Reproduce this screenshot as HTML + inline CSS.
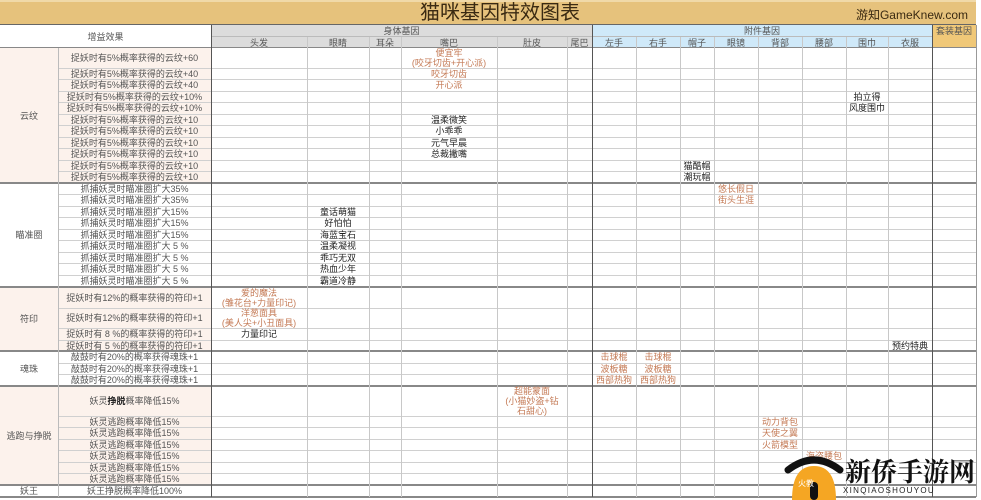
<!DOCTYPE html>
<html><head><meta charset="utf-8"><style>
*{margin:0;padding:0;box-sizing:border-box}
body{width:981px;height:500px;overflow:hidden;background:#fff;position:relative;font-family:"Liberation Sans","Noto Sans CJK SC",sans-serif}
.a{position:absolute}
.t{position:absolute;display:flex;flex-direction:column;align-items:center;justify-content:center;text-align:center;line-height:10px;font-size:9px;color:#555;white-space:nowrap}
.o{color:#c47a55}
.k{color:#222}
.h{position:absolute;left:58px;width:918px;height:1px;background:#d0d0d0}
.H{position:absolute;left:0;width:976px;height:2px;background:#888}
.v{position:absolute;top:37px;height:460px;width:1px;background:#c8c8c8}
.V{position:absolute;top:25px;height:472px;width:1px;background:#555}
</style></head><body>
<div class="a" style="left:0;top:0;width:976px;height:25px;background:#e6c27c;border-top:2px solid #f0d9a8"></div>
<div class="t" style="left:330px;top:1px;width:340px;height:24px;font-size:20px;line-height:22px;color:#3a2a12">猫咪基因特效图表</div>
<div class="t" style="left:846px;top:7px;width:132px;height:16px;font-size:12px;line-height:14px;color:#3a2a12">游知GameKnew.com</div>
<div class="a" style="left:211px;top:25px;width:381px;height:23px;background:#dcdcdc"></div>
<div class="a" style="left:592px;top:25px;width:340px;height:23px;background:#cfe9f9"></div>
<div class="a" style="left:932px;top:25px;width:44px;height:23px;background:#f0c878"></div>
<div class="a" style="left:211px;top:36px;width:721px;height:1px;background:#bbb"></div>
<div class="t" style="left:0;top:25px;width:211px;height:23px">增益效果</div>
<div class="t" style="left:211px;top:25px;width:381px;height:11px">身体基因</div>
<div class="t" style="left:592px;top:25px;width:340px;height:11px">附件基因</div>
<div class="t" style="left:932px;top:25px;width:44px;height:11px">套装基因</div>
<div class="t" style="left:211px;top:37px;width:96px;height:11px">头发</div>
<div class="t" style="left:307px;top:37px;width:62px;height:11px">眼睛</div>
<div class="t" style="left:369px;top:37px;width:32px;height:11px">耳朵</div>
<div class="t" style="left:401px;top:37px;width:96px;height:11px">嘴巴</div>
<div class="t" style="left:497px;top:37px;width:70px;height:11px">肚皮</div>
<div class="t" style="left:567px;top:37px;width:25px;height:11px">尾巴</div>
<div class="t" style="left:592px;top:37px;width:44px;height:11px">左手</div>
<div class="t" style="left:636px;top:37px;width:44px;height:11px">右手</div>
<div class="t" style="left:680px;top:37px;width:34px;height:11px">帽子</div>
<div class="t" style="left:714px;top:37px;width:44px;height:11px">眼镜</div>
<div class="t" style="left:758px;top:37px;width:44px;height:11px">背部</div>
<div class="t" style="left:802px;top:37px;width:44px;height:11px">腰部</div>
<div class="t" style="left:846px;top:37px;width:42px;height:11px">围巾</div>
<div class="t" style="left:888px;top:37px;width:44px;height:11px">衣服</div>
<div class="a" style="left:0;top:48px;width:211px;height:135px;background:#fcf2ec"></div>
<div class="a" style="left:0;top:287px;width:211px;height:64px;background:#fcf2ec"></div>
<div class="a" style="left:0;top:386px;width:211px;height:99px;background:#fcf2ec"></div>
<div class="h" style="top:68px"></div><div class="h" style="top:79px"></div><div class="h" style="top:91px"></div><div class="h" style="top:102px"></div><div class="h" style="top:114px"></div><div class="h" style="top:125px"></div><div class="h" style="top:137px"></div><div class="h" style="top:148px"></div><div class="h" style="top:160px"></div><div class="h" style="top:171px"></div>
<div class="h" style="top:194px"></div><div class="h" style="top:206px"></div><div class="h" style="top:217px"></div><div class="h" style="top:229px"></div><div class="h" style="top:240px"></div><div class="h" style="top:252px"></div><div class="h" style="top:263px"></div><div class="h" style="top:275px"></div>
<div class="h" style="top:308px"></div><div class="h" style="top:328px"></div><div class="h" style="top:340px"></div>
<div class="h" style="top:363px"></div><div class="h" style="top:374px"></div>
<div class="h" style="top:416px"></div><div class="h" style="top:427px"></div><div class="h" style="top:439px"></div><div class="h" style="top:450px"></div><div class="h" style="top:462px"></div><div class="h" style="top:473px"></div>
<div class="H" style="top:47px;height:1px"></div>
<div class="H" style="top:182px"></div><div class="H" style="top:286px"></div><div class="H" style="top:350px"></div><div class="H" style="top:385px"></div><div class="H" style="top:484px"></div><div class="H" style="top:496px"></div>
<div class="a" style="left:0;top:24px;width:976px;height:1px;background:#666"></div>
<div class="V" style="left:58px;top:48px;height:449px;background:#bbb"></div>
<div class="V" style="left:211px"></div>
<div class="v" style="left:307px"></div><div class="v" style="left:369px"></div><div class="v" style="left:401px"></div><div class="v" style="left:497px"></div><div class="v" style="left:567px"></div>
<div class="V" style="left:592px"></div>
<div class="v" style="left:636px"></div><div class="v" style="left:680px"></div><div class="v" style="left:714px"></div><div class="v" style="left:758px"></div><div class="v" style="left:802px"></div><div class="v" style="left:846px"></div><div class="v" style="left:888px"></div>
<div class="V" style="left:932px"></div>
<div class="V" style="left:976px;background:#999"></div>
<div class="t" style="left:0;top:48px;width:58px;height:135px">云纹</div>
<div class="t" style="left:0;top:183px;width:58px;height:104px">瞄准圈</div>
<div class="t" style="left:0;top:287px;width:58px;height:64px">符印</div>
<div class="t" style="left:0;top:351px;width:58px;height:35px">魂珠</div>
<div class="t" style="left:0;top:386px;width:58px;height:99px">逃跑与挣脱</div>
<div class="t" style="left:0;top:485px;width:58px;height:12px">妖王</div>
<div class="t" style="left:58px;top:48px;width:153px;height:20px">捉妖时有5%概率获得的云纹+60</div>
<div class="t" style="left:58px;top:68px;width:153px;height:11.5px">捉妖时有5%概率获得的云纹+40</div>
<div class="t" style="left:58px;top:79.5px;width:153px;height:11.5px">捉妖时有5%概率获得的云纹+40</div>
<div class="t" style="left:58px;top:91px;width:153px;height:11.5px">捉妖时有5%概率获得的云纹+10%</div>
<div class="t" style="left:58px;top:102.5px;width:153px;height:11.5px">捉妖时有5%概率获得的云纹+10%</div>
<div class="t" style="left:58px;top:114px;width:153px;height:11.5px">捉妖时有5%概率获得的云纹+10</div>
<div class="t" style="left:58px;top:125.5px;width:153px;height:11.5px">捉妖时有5%概率获得的云纹+10</div>
<div class="t" style="left:58px;top:137px;width:153px;height:11.5px">捉妖时有5%概率获得的云纹+10</div>
<div class="t" style="left:58px;top:148.5px;width:153px;height:11.5px">捉妖时有5%概率获得的云纹+10</div>
<div class="t" style="left:58px;top:160px;width:153px;height:11.5px">捉妖时有5%概率获得的云纹+10</div>
<div class="t" style="left:58px;top:171.5px;width:153px;height:11.5px">捉妖时有5%概率获得的云纹+10</div>
<div class="t" style="left:58px;top:183px;width:153px;height:11.5px">抓捕妖灵时瞄准圈扩大35%</div>
<div class="t" style="left:58px;top:194.5px;width:153px;height:11.5px">抓捕妖灵时瞄准圈扩大35%</div>
<div class="t" style="left:58px;top:206px;width:153px;height:11.5px">抓捕妖灵时瞄准圈扩大15%</div>
<div class="t" style="left:58px;top:217.5px;width:153px;height:11.5px">抓捕妖灵时瞄准圈扩大15%</div>
<div class="t" style="left:58px;top:229px;width:153px;height:11.5px">抓捕妖灵时瞄准圈扩大15%</div>
<div class="t" style="left:58px;top:240.5px;width:153px;height:11.5px">抓捕妖灵时瞄准圈扩大 5 %</div>
<div class="t" style="left:58px;top:252px;width:153px;height:11.5px">抓捕妖灵时瞄准圈扩大 5 %</div>
<div class="t" style="left:58px;top:263.5px;width:153px;height:11.5px">抓捕妖灵时瞄准圈扩大 5 %</div>
<div class="t" style="left:58px;top:275px;width:153px;height:12px">抓捕妖灵时瞄准圈扩大 5 %</div>
<div class="t" style="left:58px;top:287px;width:153px;height:21px">捉妖时有12%的概率获得的符印+1</div>
<div class="t" style="left:58px;top:308px;width:153px;height:20px">捉妖时有12%的概率获得的符印+1</div>
<div class="t" style="left:58px;top:328px;width:153px;height:12px">捉妖时有 8 %的概率获得的符印+1</div>
<div class="t" style="left:58px;top:340px;width:153px;height:11px">捉妖时有 5 %的概率获得的符印+1</div>
<div class="t" style="left:58px;top:351px;width:153px;height:12px">敲鼓时有20%的概率获得魂珠+1</div>
<div class="t" style="left:58px;top:363px;width:153px;height:11.5px">敲鼓时有20%的概率获得魂珠+1</div>
<div class="t" style="left:58px;top:374.5px;width:153px;height:11.5px">敲鼓时有20%的概率获得魂珠+1</div>
<div class="t" style="left:58px;top:386px;width:153px;height:30px"><span>妖灵<b style="color:#222">挣脱</b>概率降低15%</span></div>
<div class="t" style="left:58px;top:416px;width:153px;height:11.5px">妖灵逃跑概率降低15%</div>
<div class="t" style="left:58px;top:427.5px;width:153px;height:11.5px">妖灵逃跑概率降低15%</div>
<div class="t" style="left:58px;top:439px;width:153px;height:11.5px">妖灵逃跑概率降低15%</div>
<div class="t" style="left:58px;top:450.5px;width:153px;height:11.5px">妖灵逃跑概率降低15%</div>
<div class="t" style="left:58px;top:462px;width:153px;height:11.5px">妖灵逃跑概率降低15%</div>
<div class="t" style="left:58px;top:473.5px;width:153px;height:11.5px">妖灵逃跑概率降低15%</div>
<div class="t" style="left:58px;top:485px;width:153px;height:12px">妖王挣脱概率降低100%</div>
<div class="t o" style="left:401px;top:48px;width:96px;height:20px">便宜牢<br>(咬牙切齿+开心派)</div>
<div class="t o" style="left:401px;top:68px;width:96px;height:11.5px">咬牙切齿</div>
<div class="t o" style="left:401px;top:79.5px;width:96px;height:11.5px">开心派</div>
<div class="t k" style="left:401px;top:114px;width:96px;height:11.5px">温柔微笑</div>
<div class="t k" style="left:401px;top:125.5px;width:96px;height:11.5px">小乖乖</div>
<div class="t k" style="left:401px;top:137px;width:96px;height:11.5px">元气早晨</div>
<div class="t k" style="left:401px;top:148.5px;width:96px;height:11.5px">总裁撇嘴</div>
<div class="t k" style="left:846px;top:91px;width:42px;height:11.5px">拍立得</div>
<div class="t k" style="left:846px;top:102.5px;width:42px;height:11.5px">风度围巾</div>
<div class="t k" style="left:680px;top:160px;width:34px;height:11.5px">猫酷帽</div>
<div class="t k" style="left:680px;top:171.5px;width:34px;height:11.5px">潮玩帽</div>
<div class="t o" style="left:714px;top:183px;width:44px;height:11.5px">悠长假日</div>
<div class="t o" style="left:714px;top:194.5px;width:44px;height:11.5px">街头生涯</div>
<div class="t k" style="left:307px;top:206px;width:62px;height:11.5px">童话萌猫</div>
<div class="t k" style="left:307px;top:217.5px;width:62px;height:11.5px">好怕怕</div>
<div class="t k" style="left:307px;top:229px;width:62px;height:11.5px">海蓝宝石</div>
<div class="t k" style="left:307px;top:240.5px;width:62px;height:11.5px">温柔凝视</div>
<div class="t k" style="left:307px;top:252px;width:62px;height:11.5px">乖巧无双</div>
<div class="t k" style="left:307px;top:263.5px;width:62px;height:11.5px">热血少年</div>
<div class="t k" style="left:307px;top:275px;width:62px;height:12px">霸道冷静</div>
<div class="t o" style="left:211px;top:287px;width:96px;height:21px">爱的魔法<br>(雏花台+力量印记)</div>
<div class="t o" style="left:211px;top:308px;width:96px;height:20px">洋葱面具<br>(美人尖+小丑面具)</div>
<div class="t k" style="left:211px;top:328px;width:96px;height:12px">力量印记</div>
<div class="t k" style="left:888px;top:340px;width:44px;height:11px">预约特典</div>
<div class="t o" style="left:592px;top:351px;width:44px;height:12px">击球棍</div>
<div class="t o" style="left:592px;top:363px;width:44px;height:11.5px">波板糖</div>
<div class="t o" style="left:592px;top:374.5px;width:44px;height:11.5px">西部热狗</div>
<div class="t o" style="left:636px;top:351px;width:44px;height:12px">击球棍</div>
<div class="t o" style="left:636px;top:363px;width:44px;height:11.5px">波板糖</div>
<div class="t o" style="left:636px;top:374.5px;width:44px;height:11.5px">西部热狗</div>
<div class="t o" style="left:497px;top:386px;width:70px;height:30px">超能蒙面<br>(小猫妙盗+钻<br>石甜心)</div>
<div class="t o" style="left:758px;top:416px;width:44px;height:11.5px">动力背包</div>
<div class="t o" style="left:758px;top:427.5px;width:44px;height:11.5px">天使之翼</div>
<div class="t o" style="left:758px;top:439px;width:44px;height:11.5px">火箭模型</div>
<div class="t o" style="left:802px;top:450.5px;width:44px;height:11.5px">海盗腰包</div>
<svg class="a" style="left:784px;top:452px" width="60" height="48" viewBox="0 0 60 48">
<path d="M8 48 Q8 14 30 14 Q52 14 52 48 Z" fill="#f5a623"/>
<path d="M4 18 Q30 -2 56 18" stroke="#111" stroke-width="7" fill="none" stroke-linecap="round"/>
<rect x="26" y="30" width="8" height="18" rx="4" fill="#111"/>
<text x="14" y="34" font-size="8" fill="#fff" font-family="Noto Sans CJK SC,sans-serif">火教</text>
</svg>
<div class="t" style="left:843px;top:456px;width:134px;height:30px;font-size:26px;line-height:30px;font-weight:bold;color:#111;font-family:'Noto Serif CJK SC',serif">新侨手游网</div>
<div class="t" style="left:843px;top:486px;width:134px;height:10px;font-size:8px;color:#222;letter-spacing:1.3px;justify-content:flex-start;align-items:flex-start">XINQIAOSHOUYOU</div>
</body></html>
